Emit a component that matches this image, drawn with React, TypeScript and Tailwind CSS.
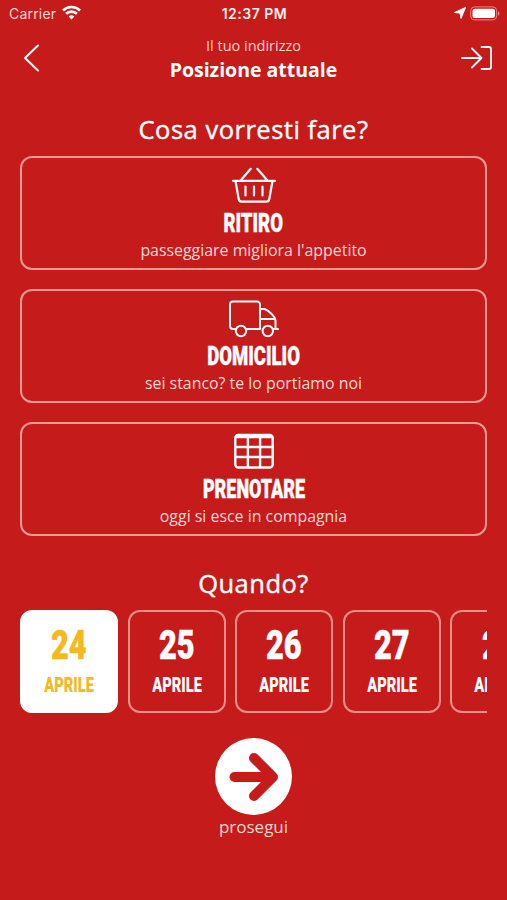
import type { ReactNode } from "react";

interface ServiceCardProps {
  icon: ReactNode;
  name: string;
  nameClass: string;
  description: string;
}

const days = ["24", "25", "26", "27", "28"];

function BasketIcon() {
  return (
    <svg className="h-10 w-12" viewBox="0 0 48 40" fill="none" stroke="currentColor" strokeWidth="2.200" strokeLinecap="round" strokeLinejoin="round">
      <path d="M3 15.800h42M5.500 16l3.200 18c.3 1.800 1.200 2.600 3 2.600h24.600c1.800 0 2.700-.800 3-2.600L42.500 16M11 15 20.700 3.800M37 15 27.300 3.800M15.500 21.500v9M24 21.500v9M32.500 21.500v9" />
    </svg>
  );
}

function TruckIcon() {
  return (
    <svg className="h-10 w-[50px]" viewBox="0 0 50 40" fill="none" stroke="currentColor" strokeWidth="2" strokeLinecap="round" strokeLinejoin="round">
      <path d="M7 31H4a3 3 0 0 1-3-3V6.500a3 3 0 0 1 3-3h24a3 3 0 0 1 3 3V31H17M31 11h4.500c3.500 1.200 11 7.500 11 12v8M31 21h15M44 31h5" />
      <circle cx="12" cy="33" r="5.200" />
      <circle cx="38.800" cy="33" r="5.200" />
    </svg>
  );
}

function TableIcon() {
  return (
    <svg className="h-10 w-10" viewBox="0 0 40 40" fill="none" stroke="currentColor" strokeWidth="2.400">
      <rect x="1.300" y="4" width="37.400" height="32.500" rx="3" />
      <path d="M2 6h36M1.300 16h37.400M1.300 26h37.400M13.900 6v30M26.100 6v30" />
    </svg>
  );
}

function ServiceCard({ icon, name, nameClass, description }: ServiceCardProps) {
  return (
    <button type="button" className="flex h-[114px] w-full shrink-0 flex-col items-center rounded-xl border-2 border-[#ee9a94] pt-[7px]">
      {icon}
      <span
        className={`mt-[5px] block h-7 font-[Roboto,sans-serif] text-[25px] leading-7 font-black whitespace-nowrap [-webkit-text-stroke:.4px_currentColor] ${nameClass}`}
      >
        {name}
      </span>
      <span className="block text-[15.900px] leading-6 whitespace-nowrap text-[#ffd9d3]">{description}</span>
    </button>
  );
}

function StatusBar() {
  return (
    <div className="grid h-7 grid-cols-3 items-center pr-[7px] pl-[9px] font-[Inter,sans-serif] leading-7">
      <div className="flex items-center gap-1.5 text-[14px] tracking-[.2px] text-[#ffd9d3]">
        <span>Carrier</span>
        <svg className="-mt-1 h-[15px] w-[19px] text-white" viewBox="0 0 19 15" fill="none" stroke="currentColor" strokeWidth="2.600">
          <path d="M1 5.500a12.200 12.200 0 0 1 17 0M4.100 8.800a7.700 7.700 0 0 1 10.800 0" />
          <path d="M9.500 14.500 6.600 11.600a4.100 4.100 0 0 1 5.800 0Z" fill="currentColor" stroke="none" />
        </svg>
      </div>
      <span className="text-center text-[14px] font-semibold tracking-[.5px] whitespace-nowrap text-[#fff0ed]">12:37 PM</span>
      <div className="-mt-0.5 flex items-center justify-end gap-1">
        <svg className="h-3 w-3" viewBox="0 0 12 12" fill="currentColor">
          <path d="M11.500.500 7 11.500 6 6 .500 5.500Z" stroke="currentColor" strokeLinejoin="round" />
        </svg>
        <svg className="h-[15px] w-[30px]" viewBox="0 0 30 15" fill="none">
          <rect x=".700" y=".900" width="26" height="13" rx="4" stroke="#eb8984" />
          <rect x="2.500" y="2.800" width="22.500" height="9.200" rx="2.300" fill="white" />
          <path d="M28 5.500c2 .500 2 3.500 0 4Z" fill="#eb8984" />
        </svg>
      </div>
    </div>
  );
}

export default function App() {
  return (
    <main className="flex h-[900px] w-[507px] flex-col overflow-hidden bg-[#c61b1b] font-['Open_Sans',sans-serif] text-white">
      <StatusBar />

      <header className="grid h-[62px] grid-cols-[1fr_auto_1fr] items-start pr-[14px] pl-[23px]">
        <button type="button" aria-label="Indietro" className="mt-4 w-4">
          <svg className="h-7 w-4" viewBox="0 0 16 28" fill="none" stroke="currentColor" strokeWidth="2" strokeLinecap="round" strokeLinejoin="round">
            <path d="M15 1.500 2 14l13 12.500" />
          </svg>
        </button>
        <div className="-ml-[9px] pt-1.5 text-center">
          <p className="text-[14.500px] leading-6 text-[#ffd0ca]">Il tuo indirizzo</p>
          <p className="text-[19.500px] leading-6 font-bold">Posizione attuale</p>
        </div>
        <button type="button" aria-label="Accedi" className="mt-[17px] justify-self-end">
          <svg className="h-[26px] w-[32px]" viewBox="0 0 32 26" fill="none" stroke="currentColor" strokeWidth="1.800" strokeLinecap="round" strokeLinejoin="round">
            <path d="M1 13h19M11 3.500 20.500 13 11 22.500M20.500 2H28a2 2 0 0 1 2 2v18a2 2 0 0 1-2 2h-7.500" />
          </svg>
        </button>
      </header>

      <section className="px-5 pt-[21px]">
        <h1 className="text-center text-[25.500px] leading-9 font-medium tracking-[.5px] [-webkit-text-stroke:.4px_white]">
          Cosa vorresti fare?
        </h1>
        <div className="mt-[9px] flex flex-col gap-[19px]">
          <ServiceCard
            icon={<BasketIcon />}
            name="RITIRO"
            nameClass="scale-x-[.74]"
            description="passeggiare migliora l'appetito"
          />
          <ServiceCard
            icon={<TruckIcon />}
            name="DOMICILIO"
            nameClass="scale-x-[.74]"
            description="sei stanco? te lo portiamo noi"
          />
          <ServiceCard
            icon={<TableIcon />}
            name="PRENOTARE"
            nameClass="scale-x-[.72]"
            description="oggi si esce in compagnia"
          />
        </div>
      </section>

      <section className="px-5 pt-[29px]">
        <h2 className="text-center text-[25.500px] leading-9 font-medium tracking-[.5px] [-webkit-text-stroke:.4px_white]">
          Quando?
        </h2>
        <div className="mt-[9px] flex gap-[9.600px] overflow-hidden">
          {days.map((day, i) => (
            <button
              key={day}
              type="button"
              className={`flex h-[103px] w-[98px] shrink-0 flex-col items-center rounded-xl border-2 pt-2.5 font-[Roboto,sans-serif] font-black ${
                i === 0 ? "border-white bg-white text-[#f2b921]" : "border-[#ea908a]"
              }`}
            >
              <span className="block scale-x-75 text-[41px] leading-[46px] [-webkit-text-stroke:.4px_currentColor]">{day}</span>
              <span className="mt-1.5 block scale-x-75 text-[19.500px] leading-6">APRILE</span>
            </button>
          ))}
        </div>
      </section>

      <footer className="flex flex-col items-center pt-[25px]">
        <button type="button" aria-label="Prosegui" className="flex size-[77px] items-center justify-center rounded-full bg-white text-[#c61b1b]">
          <svg className="size-[54px]" viewBox="0 0 54 54" fill="none" stroke="currentColor" strokeWidth="10" strokeLinecap="round" strokeLinejoin="round">
            <path d="M7.500 27h37M27 8 46 27 27 46" />
          </svg>
        </button>
        <span className="text-[17px] leading-6 text-[#ffd9d3]">prosegui</span>
      </footer>
    </main>
  );
}
